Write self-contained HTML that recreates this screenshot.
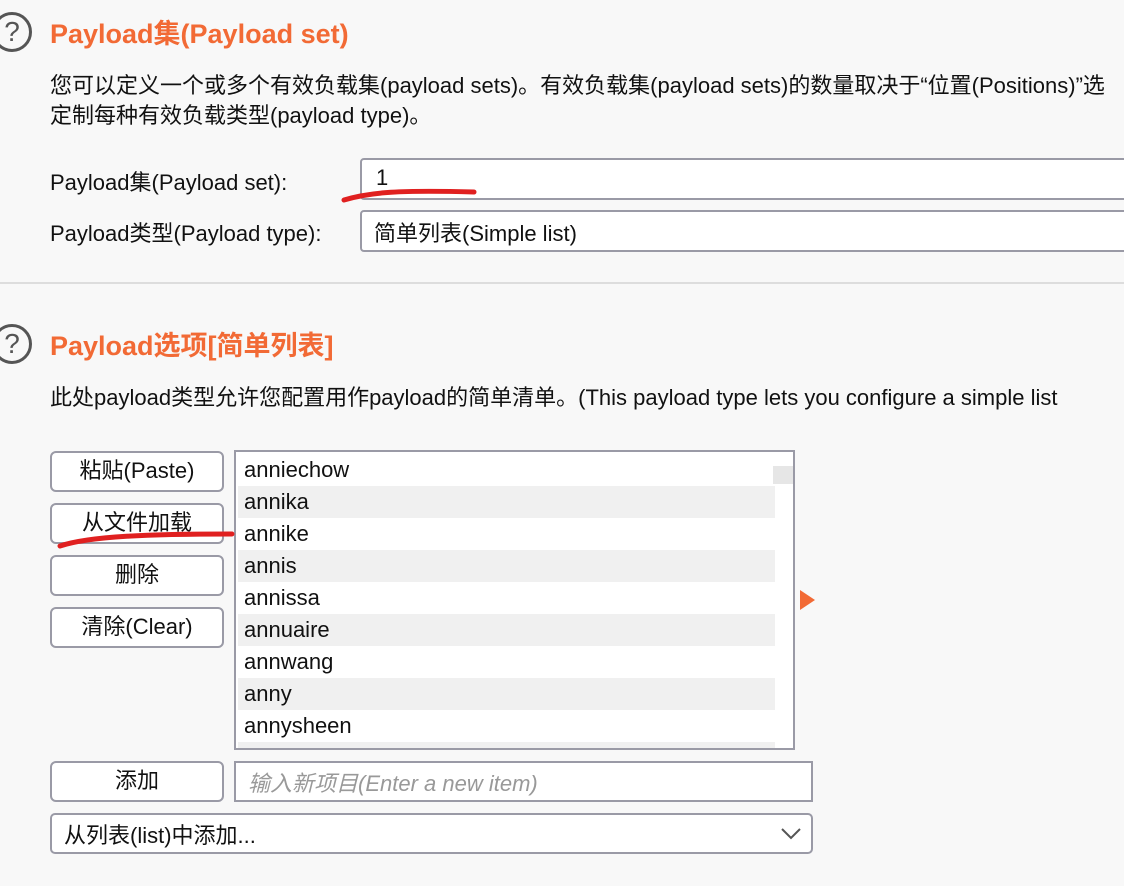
<!DOCTYPE html>
<html><head><meta charset="utf-8"><style>
body{margin:0;width:1124px;height:886px;background:#f8f8f8;position:relative;overflow:hidden;font-family:"Liberation Sans","Noto Sans CJK SC",sans-serif;color:#111;font-size:22px}
.a{position:absolute;white-space:nowrap}
.t{color:#f26a35;font-weight:bold;font-size:27px}
.box{position:absolute;background:#fff;border:2px solid #9a9aa6;border-radius:4px;box-sizing:border-box}
.btn{position:absolute;background:#fff;border:2px solid #9a9aa6;border-radius:6px;box-sizing:border-box;text-align:center;line-height:36px;left:50px;width:174px;height:41px}
.row{position:absolute;left:2px;width:537px;height:32px;line-height:32px;padding-left:6px;box-sizing:border-box}
.g{background:#f0f0f0}
.help{position:absolute;left:-8px;width:34px;height:34px;border:3px solid #555;border-radius:50%;text-align:center;line-height:34px;font-size:28px;color:#555}
</style></head><body>
<div class="help" style="top:12px">?</div>
<div class="a t" style="left:50px;top:12px">Payload集(Payload set)</div>
<div class="a" style="left:50px;top:68px">您可以定义一个或多个有效负载集(payload sets)。有效负载集(payload sets)的数量取决于“位置(Positions)”选</div>
<div class="a" style="left:50px;top:98px">定制每种有效负载类型(payload type)。</div>
<div class="a" style="left:50px;top:165px">Payload集(Payload set):</div>
<div class="a" style="left:50px;top:216px">Payload类型(Payload type):</div>
<div class="box" style="left:360px;top:158px;width:800px;height:42px"><span class="a" style="left:14px;top:5px">1</span></div>
<div class="box" style="left:360px;top:210px;width:800px;height:42px"><span class="a" style="left:12px;top:4px">简单列表(Simple list)</span></div>
<div class="a" style="left:0;top:282px;width:1124px;height:2px;background:#ddd"></div>
<div class="help" style="top:324px">?</div>
<div class="a t" style="left:50px;top:324px">Payload选项[简单列表]</div>
<div class="a" style="left:50px;top:380px">此处payload类型允许您配置用作payload的简单清单。(This payload type lets you configure a simple list</div>
<div class="btn" style="top:451px">粘贴(Paste)</div>
<div class="btn" style="top:503px">从文件加载</div>
<div class="btn" style="top:555px">删除</div>
<div class="btn" style="top:607px">清除(Clear)</div>
<div class="box" style="left:234px;top:450px;width:561px;height:300px;border-radius:0;overflow:hidden">
<div class="row" style="top:2px">anniechow</div>
<div class="row g" style="top:34px">annika</div>
<div class="row" style="top:66px">annike</div>
<div class="row g" style="top:98px">annis</div>
<div class="row" style="top:130px">annissa</div>
<div class="row g" style="top:162px">annuaire</div>
<div class="row" style="top:194px">annwang</div>
<div class="row g" style="top:226px">anny</div>
<div class="row" style="top:258px">annysheen</div>
<div class="row g" style="top:290px"></div>
<div class="a" style="left:537px;top:14px;width:20px;height:18px;background:#e6e6e6"></div>
</div>
<div class="a" style="left:800px;top:590px;width:0;height:0;border-left:15px solid #f26a35;border-top:10px solid transparent;border-bottom:10px solid transparent"></div>
<div class="btn" style="top:761px">添加</div>
<div class="box" style="left:234px;top:761px;width:579px;height:41px;border-radius:0"><span class="a" style="left:12px;top:3px;color:#999;font-style:italic">输入新项目(Enter a new item)</span></div>
<div class="box" style="left:50px;top:813px;width:763px;height:41px;border-radius:5px"><span class="a" style="left:12px;top:3px">从列表(list)中添加...</span>
<svg class="a" style="left:728px;top:12px" width="22" height="14"><path d="M2 2 L11 11 L20 2" fill="none" stroke="#555" stroke-width="2"/></svg></div>
<svg class="a" style="left:0;top:0" width="1124" height="886">
<path d="M344 200 C370 192 400 190 474 192" fill="none" stroke="#e02020" stroke-width="5" stroke-linecap="round"/>
<path d="M60 546 C90 536 150 534 232 534" fill="none" stroke="#e02020" stroke-width="5" stroke-linecap="round"/>
</svg>
</body></html>
